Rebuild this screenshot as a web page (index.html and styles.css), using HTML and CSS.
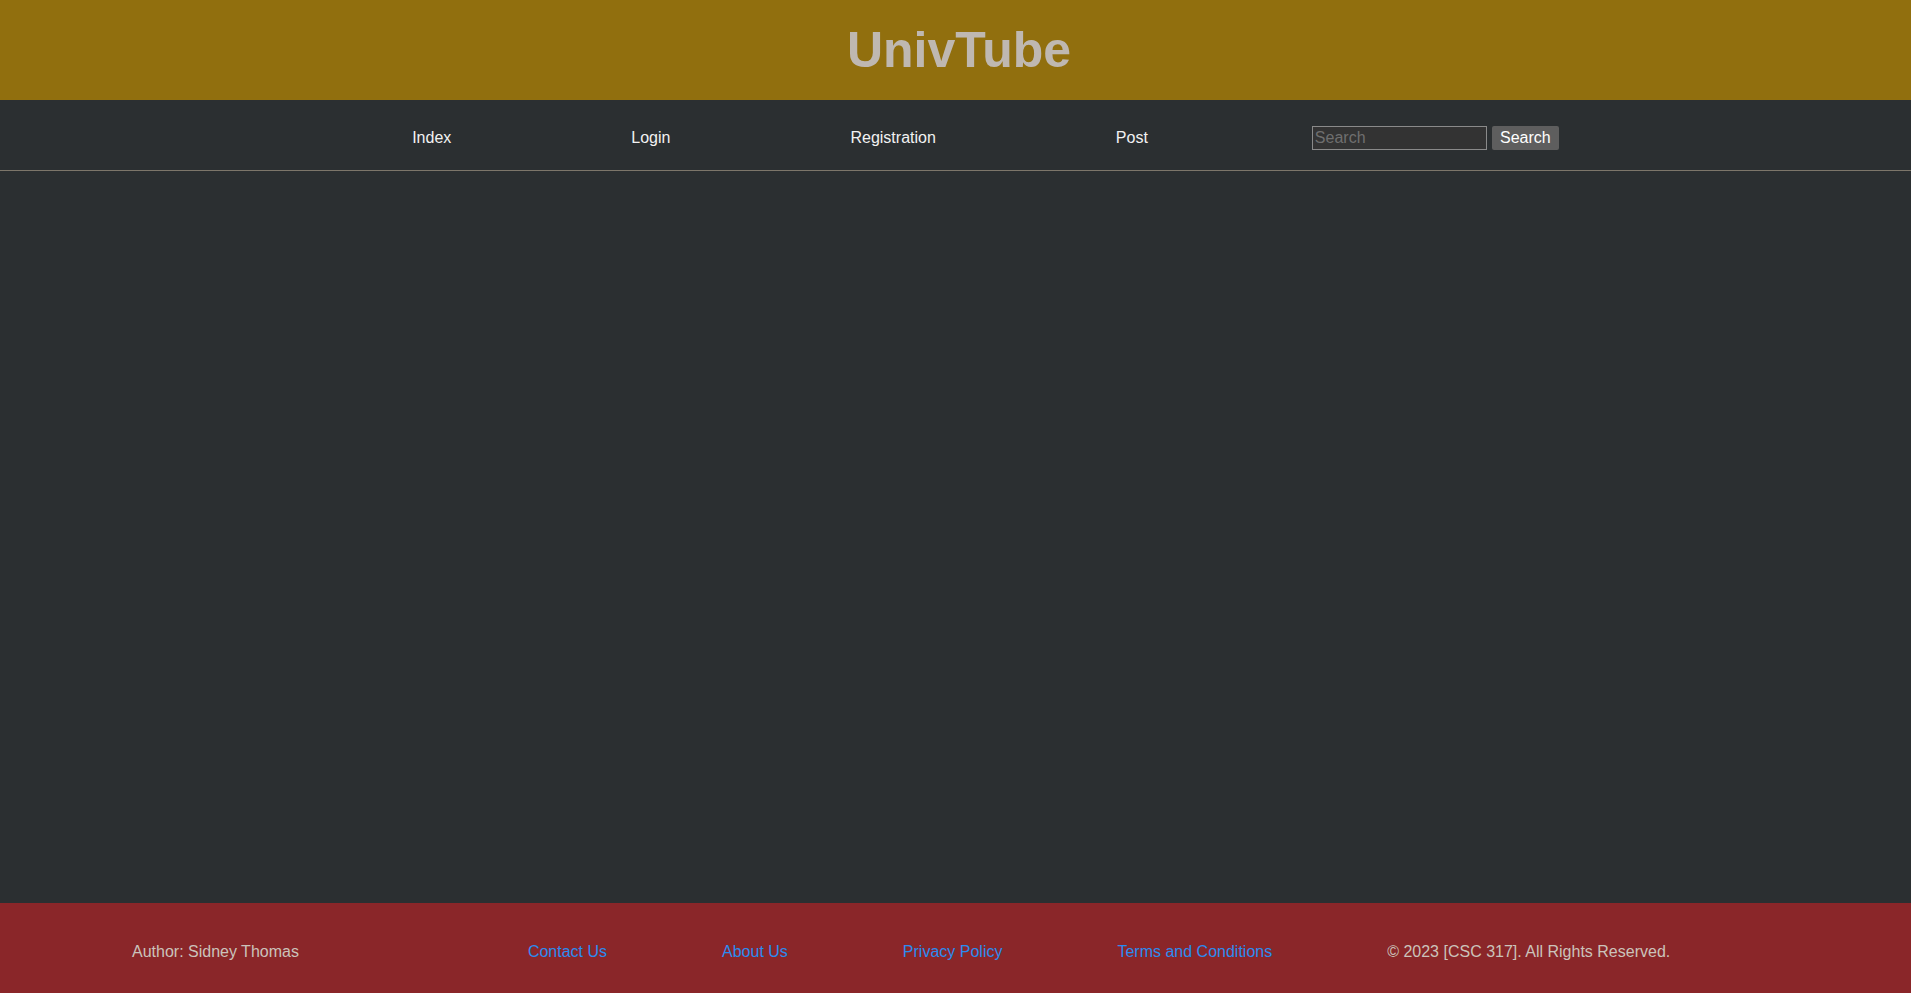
FILE: index.html
```html
<!DOCTYPE html>
<html lang="en">
<head>
<meta charset="utf-8">
<title>UnivTube</title>
<link rel="stylesheet" href="styles.css">
</head>
<body>
<div class="page">
  <header class="site-header">
    <h1 class="title">UnivTube</h1>
  </header>
  <nav class="site-nav">
    <ul class="nav-list">
      <li><a class="nav-link" href="#">Index</a></li>
      <li><a class="nav-link" href="#">Login</a></li>
      <li><a class="nav-link" href="#">Registration</a></li>
      <li><a class="nav-link" href="#">Post</a></li>
      <li class="nav-search">
        <form class="search-form">
          <input class="search-input" type="text" placeholder="Search">
          <button class="search-btn" type="button">Search</button>
        </form>
      </li>
    </ul>
  </nav>
  <main class="content"></main>
  <footer class="site-footer">
    <span class="footer-text author">Author: Sidney Thomas</span>
    <div class="footer-links">
      <a class="footer-link" href="#">Contact Us</a>
      <a class="footer-link" href="#">About Us</a>
      <a class="footer-link" href="#">Privacy Policy</a>
      <a class="footer-link" href="#">Terms and Conditions</a>
      <span class="footer-text">© 2023 [CSC 317]. All Rights Reserved.</span>
    </div>
  </footer>
</div>
</body>
</html>
```

FILE: styles.css
```css
* { box-sizing: border-box; }

html, body {
  margin: 0;
  padding: 0;
  height: 100%;
}

body {
  font-family: "Liberation Sans", Arial, Helvetica, sans-serif;
  font-size: 16px;
  background: #2b2f31;
}

.page {
  display: flex;
  flex-direction: column;
  height: 993px;
}

.site-header {
  height: 100px;
  background: #916f0e;
  display: flex;
  align-items: center;
  justify-content: center;
  padding-left: 7px;
}

.title {
  margin: 0;
  font-size: 50px;
  font-weight: bold;
  color: #bfb8b1;
  line-height: normal;
}

.site-nav {
  height: 71px;
  background: #2b2f31;
  border-bottom: 1px solid #7d766a;
}

.nav-list {
  list-style: none;
  margin: 0;
  padding: 5px 0 0 60px;
  height: 70px;
  display: flex;
  align-items: center;
  justify-content: center;
  gap: 180px;
}

.nav-search {
  margin-left: -16px;
}

.nav-link {
  color: #f2f2f2;
  text-decoration: none;
  font-size: 16px;
}

.search-form {
  display: flex;
  align-items: center;
  gap: 5px;
  margin: 0;
}

.search-input {
  width: 175px;
  height: 24px;
  background: #333333;
  border: 1px solid #8a8a8a;
  color: #dddddd;
  font-family: "Liberation Sans", Arial, sans-serif;
  font-size: 16px;
  padding: 0 2px;
  margin: 0;
}

.search-input::placeholder {
  color: #6f6f6f;
}

.search-btn {
  height: 24px;
  width: 67px;
  background: #5e5e5e;
  color: #ffffff;
  border: none;
  border-radius: 2px;
  font-family: "Liberation Sans", Arial, sans-serif;
  font-size: 16px;
  padding: 0;
  margin: 0;
}

.content {
  flex: 1;
  background: #2b2f31;
}

.site-footer {
  height: 90px;
  background: #8a2629;
  display: flex;
  align-items: center;
  padding: 8px 0 0 132px;
}

.footer-links {
  display: flex;
  align-items: center;
  gap: 115px;
  margin-left: 229px;
}

.footer-text {
  color: #cbc3bb;
  font-size: 16px;
}

.footer-link {
  color: #2a8cf0;
  text-decoration: none;
  font-size: 16px;
}
```
